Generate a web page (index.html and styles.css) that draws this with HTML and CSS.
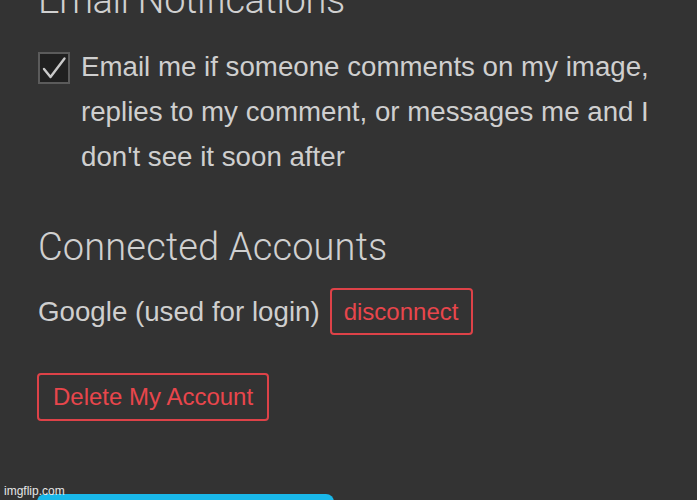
FILE: index.html
```html
<!DOCTYPE html>
<html>
<head>
<meta charset="utf-8">
<link rel="stylesheet" href="styles.css">
</head>
<body>
<div class="page">
  <h2 class="heading heading-first">Email Notifications</h2>
  <label class="check-row">
    <span class="checkbox">
      <svg viewBox="0 0 28 28" width="28" height="28"><path d="M4 15 L10.5 23 L24.5 4.5" fill="none" stroke="#c9c9c9" stroke-width="2.4" stroke-linecap="round" stroke-linejoin="round"/></svg>
    </span>
    <span class="check-text">Email me if someone comments on my image, replies to my comment, or messages me and I don't see it soon after</span>
  </label>
  <h2 class="heading heading-second">Connected Accounts</h2>
  <div class="account-row">
    <span class="account-name">Google (used for login)</span>
    <button class="btn btn-small">disconnect</button>
  </div>
  <button class="btn btn-delete">Delete My Account</button>
  <div class="blue-bar"></div>
</div>
<div class="watermark">imgflip.com</div>
</body>
</html>
```

FILE: styles.css
```css
html, body {
  margin: 0;
  padding: 0;
  background: #333333;
  overflow: hidden;
  height: 500px;
}
.page {
  padding: 0 38px;
  font-family: "Liberation Sans", Arial, sans-serif;
  color: #cfcfcf;
}
.heading {
  font-family: Roboto, "Liberation Sans", sans-serif;
  font-weight: 300;
  font-size: 38px;
  line-height: 44px;
  margin: 0;
  color: #d0d0d0;
  white-space: nowrap;
}
.heading-first {
  margin-top: -22px;
  letter-spacing: -0.4px;
}
.heading-second {
  margin-top: 46px;
  letter-spacing: 0.15px;
}
.check-row {
  display: flex;
  align-items: flex-start;
  gap: 11px;
  margin-top: 22px;
}
.checkbox {
  flex: none;
  width: 28px;
  height: 28px;
  margin-top: 8px;
  border: 2px solid #5b5b5b;
  background: #202020;
  display: flex;
  align-items: center;
  justify-content: center;
}
.check-text {
  font-size: 27.7px;
  line-height: 45px;
  width: 600px;
}
.account-row {
  display: flex;
  align-items: center;
  gap: 10px;
  margin-top: 19px;
}
.account-name {
  font-size: 27.7px;
  line-height: 47px;
}
.btn {
  font-family: "Liberation Sans", Arial, sans-serif;
  background: transparent;
  color: #e8464c;
  border: 2px solid #de4248;
  border-radius: 4px;
  font-size: 24px;
  margin: 0;
  cursor: pointer;
}
.btn-small {
  height: 47px;
  padding: 0 13px 0 12px;
}
.btn-delete {
  display: block;
  height: 48px;
  margin-top: 38px;
  margin-left: -1px;
  padding: 0 14px 0 14px;
}
.blue-bar {
  width: 297px;
  height: 40px;
  margin-top: 73px;
  margin-left: -1px;
  background: #19b8ea;
  border-radius: 8px 8px 0 0;
}
.watermark {
  position: absolute;
  left: 4px;
  top: 484px;
  font-family: "Liberation Sans", Arial, sans-serif;
  font-size: 12px;
  color: #e6e6e6;
}
```
